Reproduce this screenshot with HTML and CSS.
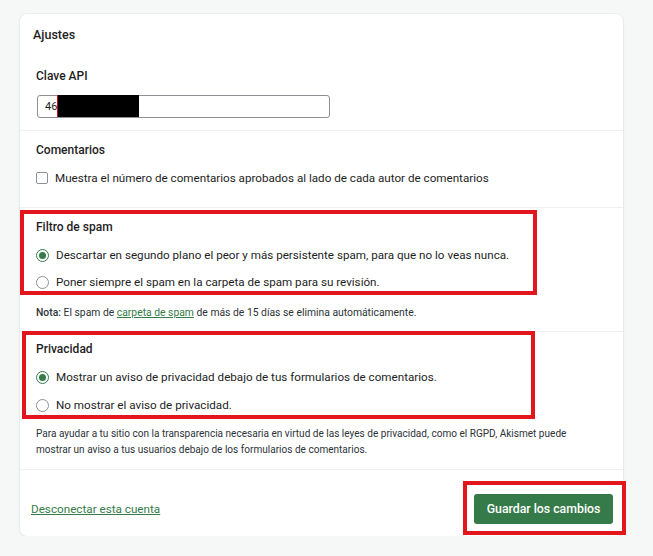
FILE: index.html
```html
<!DOCTYPE html>
<html lang="es">
<head>
<meta charset="utf-8">
<link rel="stylesheet" href="styles.css">
</head>
<body>
<div class="card">
  <div class="head">Ajustes</div>

  <div class="sect sect-api">
    <div class="label">Clave API</div>
    <div class="input">
      <span class="input-text">46</span>
      <span class="redact"></span>
    </div>
  </div>

  <div class="sect sect-com">
    <div class="label">Comentarios</div>
    <label class="row row-check"><span class="checkbox"></span><span>Muestra el número de comentarios aprobados al lado de cada autor de comentarios</span></label>
  </div>

  <div class="sect sect-spam">
    <div class="mark mark-spam">
      <div class="label">Filtro de spam</div>
      <label class="row row-r1"><span class="radio checked"></span><span>Descartar en segundo plano el peor y más persistente spam, para que no lo veas nunca.</span></label>
      <label class="row row-r2"><span class="radio"></span><span>Poner siempre el spam en la carpeta de spam para su revisión.</span></label>
    </div>
    <p class="note"><b>Nota:</b> El spam de <a class="link" href="#">carpeta de spam</a> de más de 15 días se elimina automáticamente.</p>
  </div>

  <div class="sect sect-priv">
    <div class="mark mark-priv">
      <div class="label">Privacidad</div>
      <label class="row row-r1"><span class="radio checked"></span><span>Mostrar un aviso de privacidad debajo de tus formularios de comentarios.</span></label>
      <label class="row row-r1"><span class="radio"></span><span>No mostrar el aviso de privacidad.</span></label>
    </div>
    <p class="para">Para ayudar a tu sitio con la transparencia necesaria en virtud de las leyes de privacidad, como el RGPD, Akismet puede mostrar un aviso a tus usuarios debajo de los formularios de comentarios.</p>
  </div>

  <div class="foot">
    <a class="link disconnect" href="#">Desconectar esta cuenta</a>
    <div class="mark mark-btn">
      <button class="btn" type="button">Guardar los cambios</button>
    </div>
  </div>
</div>
</body>
</html>
```

FILE: styles.css
```css
* { box-sizing: border-box; }

html, body {
  margin: 0;
  background: #f6f7f7;
}

body {
  padding: 14px 0 0 20px;
  font-family: "Roboto", "Liberation Sans", sans-serif;
  color: #1e1e1e;
  font-size: 11.65px;
}

.card {
  width: 603px;
  background: #fff;
  border-radius: 7px;
  box-shadow: 0 0 0 1px rgba(0,0,0,0.03), 0 1px 3px rgba(0,0,0,0.06);
}

.head {
  padding: 14px 13px 0;
  height: 28px;
  line-height: 14px;
  font-size: 12.5px;
  font-weight: 500;
}

.label {
  line-height: 14px;
  font-size: 12px;
  font-weight: 500;
}

.sect {
  border-bottom: 1px solid #f0f0f1;
}

.sect-api {
  padding: 27px 16px 12px 16px;
}

.input {
  position: relative;
  margin: 12px 0 0 1px;
  width: 293px;
  height: 23px;
  border: 1px solid #8c8f94;
  border-radius: 3px;
  display: flex;
  align-items: center;
  padding-left: 7px;
  font-size: 11px;
}

.redact {
  position: absolute;
  left: 19px;
  top: -1px;
  width: 82px;
  height: 22px;
  background: #000;
  border-left: 1px solid #d01010;
}

.sect-com {
  padding: 12px 16px 22px 16px;
}

.row {
  display: flex;
  align-items: center;
  height: 14px;
  line-height: 14px;
  gap: 7px;
  white-space: nowrap;
}

.row-check { margin-top: 14px; }

.checkbox {
  width: 12px;
  height: 12px;
  border: 1px solid #8c8f94;
  border-radius: 2px;
  flex: none;
}

.radio {
  width: 13px;
  height: 13px;
  border: 1px solid #8c8f94;
  border-radius: 50%;
  flex: none;
  display: flex;
  align-items: center;
  justify-content: center;
}

.radio.checked {
  border-color: #357b49;
}

.radio.checked::after {
  content: "";
  width: 7px;
  height: 7px;
  border-radius: 50%;
  background: #357b49;
}

.mark {
  border: 4px solid #e3161d;
}

.sect-spam {
  padding: 2px 0 11px 0;
}

.mark-spam {
  width: 517px;
  padding: 6px 0 2px 12px;
}

.row-r1 { margin-top: 14px; }
.row-r2 { margin-top: 13px; }

.note {
  margin: 11px 0 0 16px;
  line-height: 14px;
  font-size: 10.35px;
  color: #2c3338;
}

.note b { font-weight: 500; }

.link {
  color: #357b49;
  text-decoration: underline;
}

.sect-priv {
  padding: 0 0 11px 0;
}

.mark-priv {
  margin: -1px 0 0 2px;
  width: 513px;
  padding: 7px 0 3px 10px;
}

.para {
  margin: 7px 30px 0 16px;
  line-height: 16px;
  font-size: 10.05px;
  color: #2c3338;
}

.foot {
  display: flex;
  justify-content: space-between;
  align-items: center;
  padding: 11px 0 1px 11px;
}

.disconnect {
  font-size: 11.7px;
  margin-top: 2px;
}

.mark-btn {
  margin-right: -3px;
  padding: 9px 9px 7px 7px;
}

.btn {
  display: block;
  width: 139px;
  height: 30px;
  border: 0;
  border-radius: 3px;
  background: #357b49;
  color: #fff;
  font-family: "Roboto", "Liberation Sans", sans-serif;
  font-size: 12.3px;
  font-weight: 500;
  padding: 0;
}
```
